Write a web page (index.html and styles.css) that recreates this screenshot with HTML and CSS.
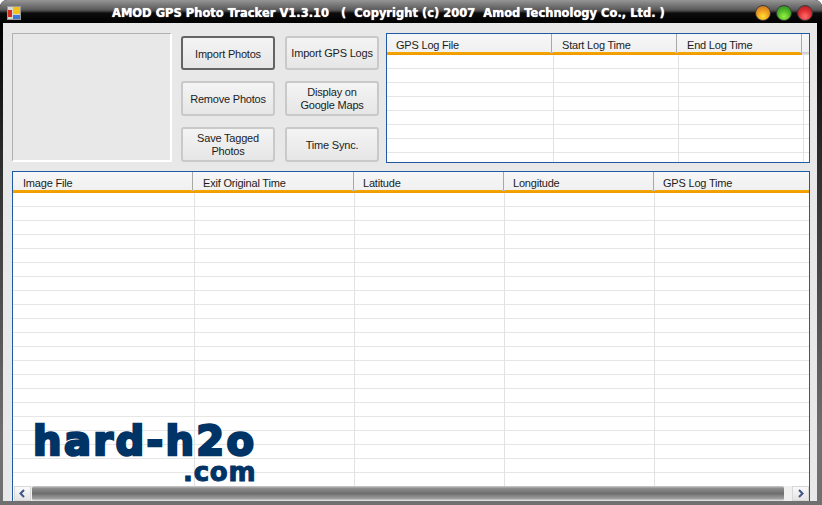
FILE: index.html
```html
<!DOCTYPE html>
<html lang="en">
<head>
    <meta charset="UTF-8">
    <title>AMOD GPS Photo Tracker</title>
    <link rel="stylesheet" href="styles.css">
</head>
<body>
    <div class="window">
        <div class="titlebar">
            <svg class="app-icon" width="14" height="14" viewBox="0 0 14 14">
                <rect x="0" y="0" width="14" height="14" fill="#d8d8d0"/>
                <rect x="0.5" y="0.5" width="13" height="13" fill="none" stroke="#9a9a9a"/>
                <rect x="6" y="1" width="7" height="7" fill="#f2c21a"/>
                <rect x="1" y="4" width="4" height="7" fill="#d42a20"/>
                <rect x="6" y="9" width="7" height="4" fill="#3c78d8"/>
            </svg>
            <div class="title">AMOD GPS Photo Tracker V1.3.10 &nbsp; ( &nbsp;Copyright (c) 2007 &nbsp;Amod Technology Co., Ltd. )</div>
            <div class="lights">
                <span class="light orange"></span>
                <span class="light green"></span>
                <span class="light red"></span>
            </div>
        </div>

        <div class="client">
            <div class="top-row">
                <div class="picture"></div>
                <div class="buttons">
                    <button class="btn default">Import Photos</button>
                    <button class="btn">Import GPS Logs</button>
                    <button class="btn">Remove Photos</button>
                    <button class="btn">Display on<br>Google Maps</button>
                    <button class="btn">Save Tagged<br>Photos</button>
                    <button class="btn">Time Sync.</button>
                </div>
                <div class="list log-list">
                    <div class="list-head">
                        <div class="col log-file">GPS Log File</div>
                        <div class="col log-time">Start Log Time</div>
                        <div class="col log-time">End Log Time</div>
                        <div class="col filler"></div>
                    </div>
                    <div class="list-body"></div>
                </div>
            </div>

            <div class="list photo-list">
                <div class="list-head">
                    <div class="col image-file">Image File</div>
                    <div class="col exif-time">Exif Original Time</div>
                    <div class="col coord">Latitude</div>
                    <div class="col coord">Longitude</div>
                    <div class="col gps-time">GPS Log Time</div>
                </div>
                <div class="list-body"></div>
                <div class="hscroll">
                    <div class="arrow">
                        <svg width="9" height="9" viewBox="0 0 9 9"><path d="M6 1 L2.5 4.5 L6 8" fill="none" stroke="#3f5587" stroke-width="2"/></svg>
                    </div>
                    <div class="thumb"></div>
                    <div class="arrow">
                        <svg width="9" height="9" viewBox="0 0 9 9"><path d="M3 1 L6.5 4.5 L3 8" fill="none" stroke="#3f5587" stroke-width="2"/></svg>
                    </div>
                </div>
                <div class="watermark">
                    <div class="wm-main">hard-h2o</div>
                    <div class="wm-sub">.com</div>
                </div>
            </div>
        </div>
    </div>
</body>
</html>
```

FILE: styles.css
```css
html, body {
    margin: 0;
    padding: 0;
    height: 100%;
    background-color: #ffffff;
}

.window {
    width: 822px;
    height: 505px;
    display: flex;
    flex-direction: column;
    overflow: hidden;
    border-radius: 7px 7px 0 0;
    background: linear-gradient(to bottom, #000000 20px, #2a2a2a 150px, #707070 440px);
    font-family: "Liberation Sans", Arial, sans-serif;
}

.titlebar {
    height: 23px;
    flex: none;
    display: flex;
    align-items: center;
    position: relative;
    background: linear-gradient(to bottom, #969696 0, #585858 10px, #2c2c2c 12px, #0c0c0c 13px, #000000 23px);
}

.app-icon {
    margin: 2px 0 0 7px;
    flex: none;
}

.title {
    position: absolute;
    left: 112px;
    top: 5px;
    font-family: "DejaVu Sans", Verdana, sans-serif;
    font-weight: bold;
    font-size: 11.5px;
    line-height: 16px;
    color: #ffffff;
    white-space: pre;
    text-shadow: 0 0 1px #ffffff;
}

.lights {
    margin-left: auto;
    margin-right: 9px;
    margin-top: 2px;
    display: flex;
    gap: 5px;
}

.light {
    width: 16px;
    height: 16px;
    border-radius: 50%;
    border: 1px solid #3a3a3a;
    box-sizing: border-box;
}

.orange {
    background: radial-gradient(circle at 50% 75%, #fde030 0, #f09a20 50%, #b86a20 100%);
}

.green {
    background: radial-gradient(circle at 50% 75%, #9cf040 0, #4cb828 50%, #2f7c24 100%);
}

.red {
    background: radial-gradient(circle at 50% 75%, #ff7070 0, #e02c30 50%, #982028 100%);
}

.client {
    margin: 0 5px 4px 3px;
    flex: 1;
    min-height: 0;
    background-color: #e8e8e8;
    padding: 10px 7px 0 9px;
    display: flex;
    flex-direction: column;
    gap: 8px;
}

.top-row {
    display: flex;
    height: 130px;
    flex: none;
}

.picture {
    width: 160px;
    height: 129px;
    box-sizing: border-box;
    border-top: 1px solid #b0b0b0;
    border-left: 1px solid #b0b0b0;
    border-right: 2px solid #ffffff;
    border-bottom: 2px solid #ffffff;
    background-color: #e8e8e8;
}

.buttons {
    width: 198px;
    margin: 3px 0 0 9px;
    display: grid;
    grid-template-columns: 94px 94px;
    grid-template-rows: 34px 35px 35px;
    column-gap: 10px;
    row-gap: 11px;
}

.btn {
    padding: 1px 0 0 0;
    border: 2px solid #c9c9c9;
    border-radius: 3px;
    background: linear-gradient(to bottom, #f4f4f4, #e6e6e6);
    font-family: "Liberation Sans", Arial, sans-serif;
    font-size: 11px;
    letter-spacing: -0.2px;
    line-height: 13px;
    color: #1c1c1c;
}

.default {
    padding-top: 2px;
    border-color: #646464;
}

.list {
    background-color: #ffffff;
    border: 1px solid #1f5aa6;
    box-sizing: border-box;
    position: relative;
    display: flex;
    flex-direction: column;
    overflow: hidden;
}

.log-list {
    width: 424px;
    height: 130px;
    margin-left: 7px;
}

.photo-list {
    flex: 1;
    min-height: 0;
    border-bottom: 0;
}

.list-head {
    height: 21px;
    flex: none;
    display: flex;
    background: linear-gradient(to bottom, #f7f7f7 0, #f0f0f0 18px, #f5a800 18px, #ee9800 21px);
    padding-left: 1px;
}

.col {
    box-sizing: border-box;
    height: 18px;
    padding-left: 9px;
    font-size: 11px;
    letter-spacing: -0.2px;
    line-height: 22px;
    color: #1c1c1c;
    white-space: nowrap;
    border-right: 1px solid #a8a8a8;
    flex: none;
    position: relative;
}

/* little grey notch over the orange line at each column end */
.col::after {
    content: "";
    position: absolute;
    right: -2px;
    top: 18px;
    width: 3px;
    height: 1px;
    background-color: #b4bcc4;
}

.log-file {
    width: 164px;
    padding-left: 8px;
}

.log-time {
    width: 125px;
    padding-left: 10px;
}

/* empty end of the header has no orange line */
.filler {
    flex: 1;
    height: 21px;
    border-right: 0;
    background: linear-gradient(to bottom, #f7f7f7 0, #f0f0f0 18px, #c4c8cc 18px, #e4e4e4 21px);
}

.image-file {
    width: 179px;
}

.exif-time {
    width: 161px;
    padding-left: 10px;
}

.coord {
    width: 150px;
}

.gps-time {
    flex: 1;
    border-right: 0;
}

.filler::after,
.gps-time::after {
    display: none;
}

.list-body {
    flex: 1;
    min-height: 0;
    background-color: #ffffff;
    background-image: repeating-linear-gradient(to bottom, transparent 0, transparent 13px, #e6e6e6 13px, #e6e6e6 14px);
}

.log-list .list-body {
    background-image:
        linear-gradient(to right, transparent 166px, #e2e2e2 166px, #e2e2e2 167px, transparent 167px, transparent 291px, #e2e2e2 291px, #e2e2e2 292px, transparent 292px, transparent 416px, #e2e2e2 416px, #e2e2e2 417px, transparent 417px),
        repeating-linear-gradient(to bottom, transparent 0, transparent 13px, #e6e6e6 13px, #e6e6e6 14px);
}

.photo-list .list-body {
    background-image:
        linear-gradient(to right, transparent 181px, #e2e2e2 181px, #e2e2e2 182px, transparent 182px, transparent 341px, #e2e2e2 341px, #e2e2e2 342px, transparent 342px, transparent 491px, #e2e2e2 491px, #e2e2e2 492px, transparent 492px, transparent 641px, #e2e2e2 641px, #e2e2e2 642px, transparent 642px),
        repeating-linear-gradient(to bottom, transparent 0, transparent 13px, #e6e6e6 13px, #e6e6e6 14px);
}

.hscroll {
    height: 15px;
    flex: none;
    display: flex;
    align-items: stretch;
    background-color: #f0f0f0;
    margin: 0 0 0 1px;
}

.arrow {
    width: 17px;
    flex: none;
    display: flex;
    align-items: center;
    justify-content: center;
    background: linear-gradient(to bottom, #fafafa, #e4e4e4);
    border: 1px solid #d8d8d8;
    box-sizing: border-box;
}

.thumb {
    flex: 1;
    margin: 0 8px 0 1px;
    background: linear-gradient(to bottom, #d0d0d0 0, #8e8e8e 15%, #6e6e6e 50%, #a0a0a0 85%, #f0f0f0 100%);
    border-radius: 2px;
}

.watermark {
    position: absolute;
    left: 20px;
    top: 247px;
    color: #003366;
    font-family: "DejaVu Sans", Arial, sans-serif;
    font-weight: bold;
    text-align: right;
}

.wm-main {
    font-size: 40px;
    letter-spacing: 2.4px;
    line-height: 44px;
    -webkit-text-stroke: 2.5px #003366;
}

.wm-sub {
    font-size: 26px;
    letter-spacing: 0.8px;
    line-height: 18px;
    -webkit-text-stroke: 1px #003366;
}
```
